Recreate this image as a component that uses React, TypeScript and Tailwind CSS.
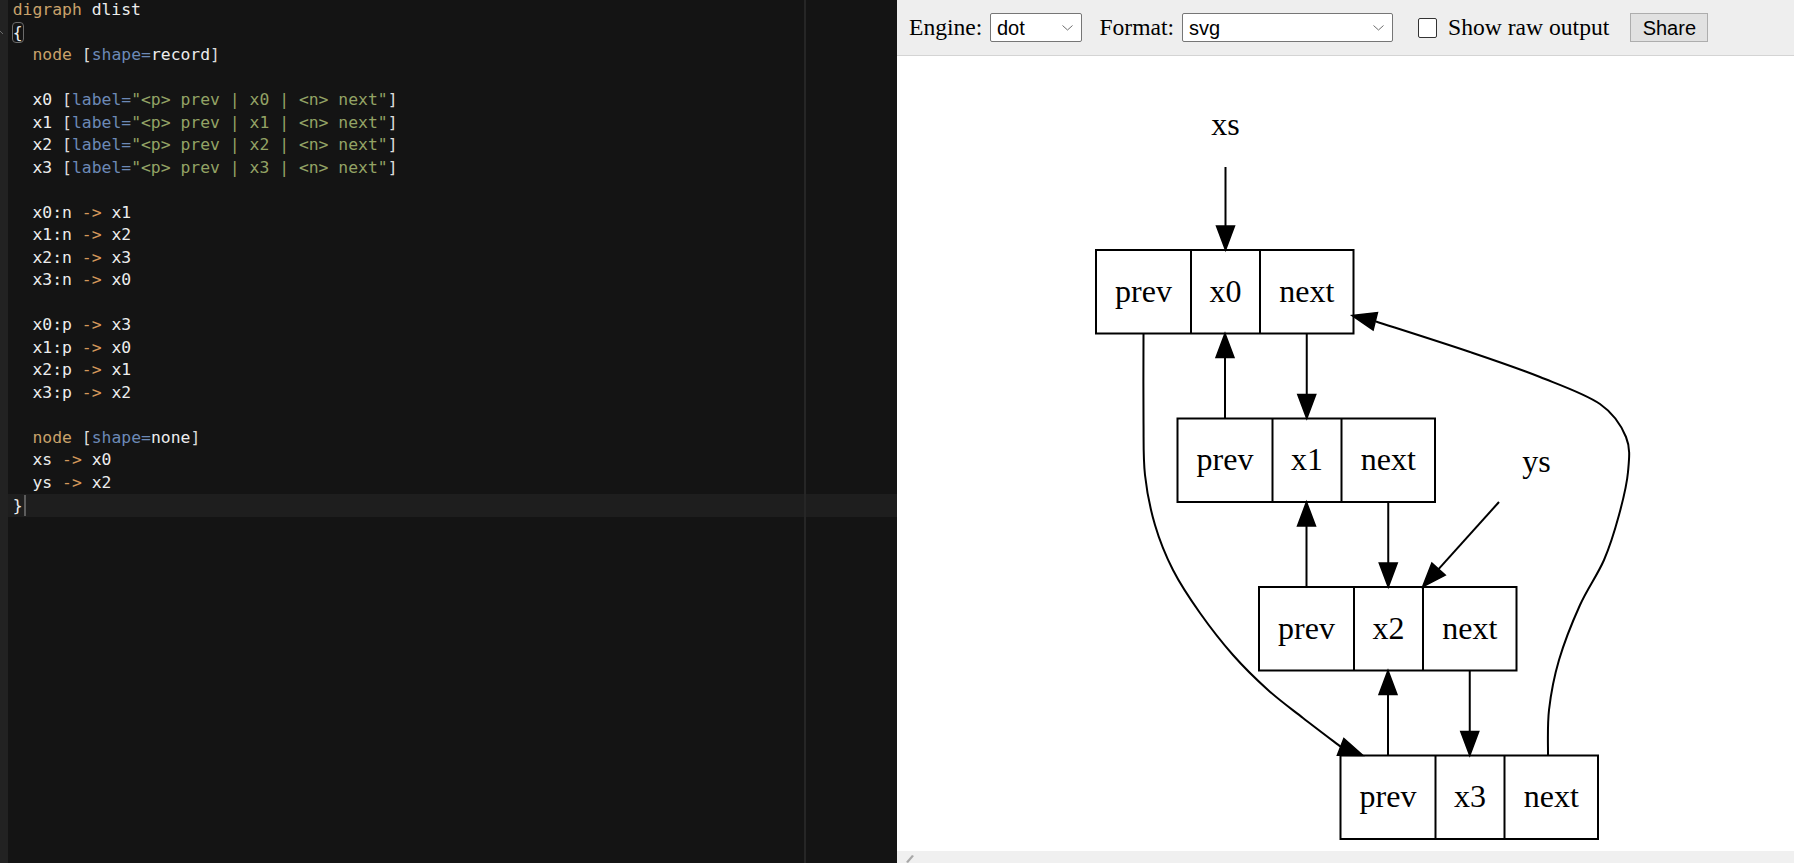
import React from 'react';

type Tok = [keyof typeof C, string];

const C = {
  kw: 'text-[#c9a26b]',
  id: 'text-[#ededed]',
  at: 'text-[#6c89b6]',
  st: 'text-[#93a365]',
  op: 'text-[#d4985a]',
  br: 'text-[#dcdcdc]',
};

const labelLine = (n: string): Tok[] => [
  ['id', `  ${n} `],
  ['br', '['],
  ['at', 'label='],
  ['st', `"<p> prev | ${n} | <n> next"`],
  ['br', ']'],
];

const edgeLine = (a: string, b: string): Tok[] => [
  ['id', `  ${a} `],
  ['op', '->'],
  ['id', ` ${b}`],
];

const lines: Tok[][] = [
  [['kw', 'digraph'], ['id', ' dlist']],
  [],
  [['id', '  '], ['kw', 'node'], ['id', ' '], ['br', '['], ['at', 'shape='], ['id', 'record'], ['br', ']']],
  [],
  labelLine('x0'),
  labelLine('x1'),
  labelLine('x2'),
  labelLine('x3'),
  [],
  edgeLine('x0:n', 'x1'),
  edgeLine('x1:n', 'x2'),
  edgeLine('x2:n', 'x3'),
  edgeLine('x3:n', 'x0'),
  [],
  edgeLine('x0:p', 'x3'),
  edgeLine('x1:p', 'x0'),
  edgeLine('x2:p', 'x1'),
  edgeLine('x3:p', 'x2'),
  [],
  [['id', '  '], ['kw', 'node'], ['id', ' '], ['br', '['], ['at', 'shape='], ['id', 'none'], ['br', ']']],
  edgeLine('xs', 'x0'),
  edgeLine('ys', 'x2'),
];

// catmull-rom -> cubic bezier
function smooth(pts: number[][]) {
  let d = `M${pts[0][0]},${pts[0][1]}`;
  for (let i = 0; i < pts.length - 1; i++) {
    const p0 = pts[i - 1] || pts[i];
    const p1 = pts[i];
    const p2 = pts[i + 1];
    const p3 = pts[i + 2] || p2;
    const c1 = [p1[0] + (p2[0] - p0[0]) / 6, p1[1] + (p2[1] - p0[1]) / 6];
    const c2 = [p2[0] - (p3[0] - p1[0]) / 6, p2[1] - (p3[1] - p1[1]) / 6];
    d += ` C${c1[0]},${c1[1]} ${c2[0]},${c2[1]} ${p2[0]},${p2[1]}`;
  }
  return d;
}

function head(tx: number, ty: number, fx: number, fy: number, L = 24, W = 9) {
  const dx = tx - fx;
  const dy = ty - fy;
  const len = Math.hypot(dx, dy);
  const ux = dx / len;
  const uy = dy / len;
  const bx = tx - ux * L;
  const by = ty - uy * L;
  const px = -uy * W;
  const py = ux * W;
  return `${tx},${ty} ${bx + px},${by + py} ${bx - px},${by - py}`;
}

const Arrow = ({ x1, y1, x2, y2 }: { x1: number; y1: number; x2: number; y2: number }) => {
  const len = Math.hypot(x2 - x1, y2 - y1);
  const ex = x2 - ((x2 - x1) / len) * 24;
  const ey = y2 - ((y2 - y1) / len) * 24;
  return (
    <g>
      <line x1={x1} y1={y1} x2={ex} y2={ey} stroke="#000" strokeWidth={2} />
      <polygon points={head(x2, y2, x1, y1)} fill="#000" stroke="#000" strokeWidth={1.5} />
    </g>
  );
};

const W1 = 95;
const W2 = 69;
const W3 = 93.5;
const H = 83.5;

const nodes = [
  { x: 1096, y: 250, name: 'x0' },
  { x: 1177.5, y: 418.5, name: 'x1' },
  { x: 1259, y: 587, name: 'x2' },
  { x: 1340.5, y: 755.5, name: 'x3' },
];

const Record = ({ x, y, name }: { x: number; y: number; name: string }) => (
  <g>
    <rect x={x} y={y} width={W1 + W2 + W3} height={H} fill="none" stroke="#000" strokeWidth={2} />
    <line x1={x + W1} y1={y} x2={x + W1} y2={y + H} stroke="#000" strokeWidth={2} />
    <line x1={x + W1 + W2} y1={y} x2={x + W1 + W2} y2={y + H} stroke="#000" strokeWidth={2} />
    <text x={x + W1 / 2} y={y + 51.5} textAnchor="middle">prev</text>
    <text x={x + W1 + W2 / 2} y={y + 51.5} textAnchor="middle">{name}</text>
    <text x={x + W1 + W2 + W3 / 2} y={y + 51.5} textAnchor="middle">next</text>
  </g>
);

const leftCurve = [
  [1143.5, 334], [1143.5, 420], [1145, 475], [1155, 525], [1173, 570], [1200, 613],
  [1233, 655], [1268, 690], [1303, 718], [1341, 747],
];

const rightCurve = [
  [1548, 755.5], [1549, 710], [1559, 660], [1580, 605], [1604, 560], [1619, 515],
  [1628, 472], [1626, 437], [1600, 404], [1540, 377], [1470, 352], [1376, 321.5],
];

const Graph = () => (
  <svg width={897} height={795} viewBox="897 56 897 795" fontFamily="Liberation Serif, serif" fontSize={32}>
    <text x={1225.5} y={135} textAnchor="middle">xs</text>
    <text x={1536.5} y={472} textAnchor="middle">ys</text>
    {nodes.map(n => (
      <Record key={n.name} {...n} />
    ))}
    <Arrow x1={1225.5} y1={167} x2={1225.5} y2={250} />
    {nodes.slice(0, 3).map((n, i) => {
      const nx = nodes[i + 1];
      const nextX = n.x + W1 + W2 + W3 / 2;
      const prevX = nx.x + W1 / 2;
      return (
        <g key={n.name}>
          <Arrow x1={nextX} y1={n.y + H} x2={nextX} y2={nx.y} />
          <Arrow x1={prevX} y1={nx.y} x2={prevX} y2={n.y + H} />
        </g>
      );
    })}
    <Arrow x1={1499} y1={502} x2={1422.5} y2={587} />
    <path d={smooth(leftCurve)} fill="none" stroke="#000" strokeWidth={2} />
    <polygon points={head(1363, 755.5, 1341, 747)} fill="#000" stroke="#000" strokeWidth={1.5} />
    <path d={smooth(rightCurve)} fill="none" stroke="#000" strokeWidth={2} />
    <polygon points={head(1352, 315.5, 1376, 321.5)} fill="#000" stroke="#000" strokeWidth={1.5} />
  </svg>
);

const Select = ({ value, width }: { value: string; width: string }) => (
  <div
    className={`${width} h-[29px] bg-white border border-[#767676] rounded-[2px] flex items-center justify-between pl-[6px] pr-[8px] font-['Liberation_Sans',Arial,sans-serif] text-[20px] text-black`}
  >
    <span>{value}</span>
    <svg width="11" height="6" viewBox="0 0 11 6">
      <path d="M0.5 0.5 L5.5 5 L10.5 0.5" fill="none" stroke="#6d6d6d" strokeWidth="1" />
    </svg>
  </div>
);

export default function App() {
  return (
    <div className="flex w-[1794px] h-[863px] overflow-hidden">
      {/* editor */}
      <div className="flex w-[897px] h-full bg-[#141414] font-['DejaVu_Sans_Mono',monospace] text-[16.4px]">
        <div className="w-[8px] h-full bg-[#222222] shrink-0 pt-[30px]">
          <svg width="5" height="6" viewBox="0 0 5 6">
            <path d="M0 1 L3 4" fill="none" stroke="#6a6a6a" strokeWidth="1" />
          </svg>
        </div>
        <div className="relative flex-1 -mt-[1px]">
          {lines.map((toks, i) => (
            <div key={i} className="h-[22.5px] leading-[22.5px] whitespace-pre pl-[4.7px]">
              {i === 1 ? (
                <span className="text-[#ededed] outline outline-1 outline-[#6b6b6b] rounded-[3px]">{'{'}</span>
              ) : (
                toks.map(([k, t], j) => (
                  <span key={j} className={C[k]}>
                    {t}
                  </span>
                ))
              )}
            </div>
          ))}
          <div className="h-[23px] leading-[23px] whitespace-pre pl-[4.7px] bg-[#1e1e1e] flex items-center">
            <span className="text-[#ededed]">{'}'}</span>
            <span className="w-[2px] h-[21px] bg-[#5c5c5c] ml-[1px]" />
          </div>
          <div className="absolute top-0 bottom-0 left-[796px] w-[2px] bg-[#262626]" />
        </div>
      </div>

      {/* output */}
      <div className="flex flex-col w-[897px] h-full">
        <div className="h-[56px] shrink-0 bg-[#eeeeee] border-b border-[#d4d4d4] flex items-center pl-[12px] font-['Liberation_Serif',serif] text-[23.6px] text-black">
          <span>Engine:</span>
          <div className="ml-[7.5px]">
            <Select value="dot" width="w-[92px]" />
          </div>
          <span className="ml-[17.5px]">Format:</span>
          <div className="ml-[8px]">
            <Select value="svg" width="w-[211px]" />
          </div>
          <div className="ml-[25px] w-[19px] h-[20px] bg-white border border-[#333333] rounded-[2px]" />
          <span className="ml-[11px]">Show raw output</span>
          <div className="ml-[21px] w-[78px] h-[29px] bg-[#e1e1e1] border border-[#adadad] flex items-center justify-center font-['Liberation_Sans',Arial,sans-serif] text-[20px]">
            Share
          </div>
        </div>
        <div className="flex-1 bg-white overflow-hidden">
          <Graph />
        </div>
        <div className="h-[12px] shrink-0 bg-[#f0f0f0] pl-[8px] pt-[2px]">
          <svg width="10" height="10" viewBox="0 0 10 10">
            <path d="M1 9 L7 2 L9 3 L3 10 Z" fill="#a8a8a8" />
          </svg>
        </div>
      </div>
    </div>
  );
}
